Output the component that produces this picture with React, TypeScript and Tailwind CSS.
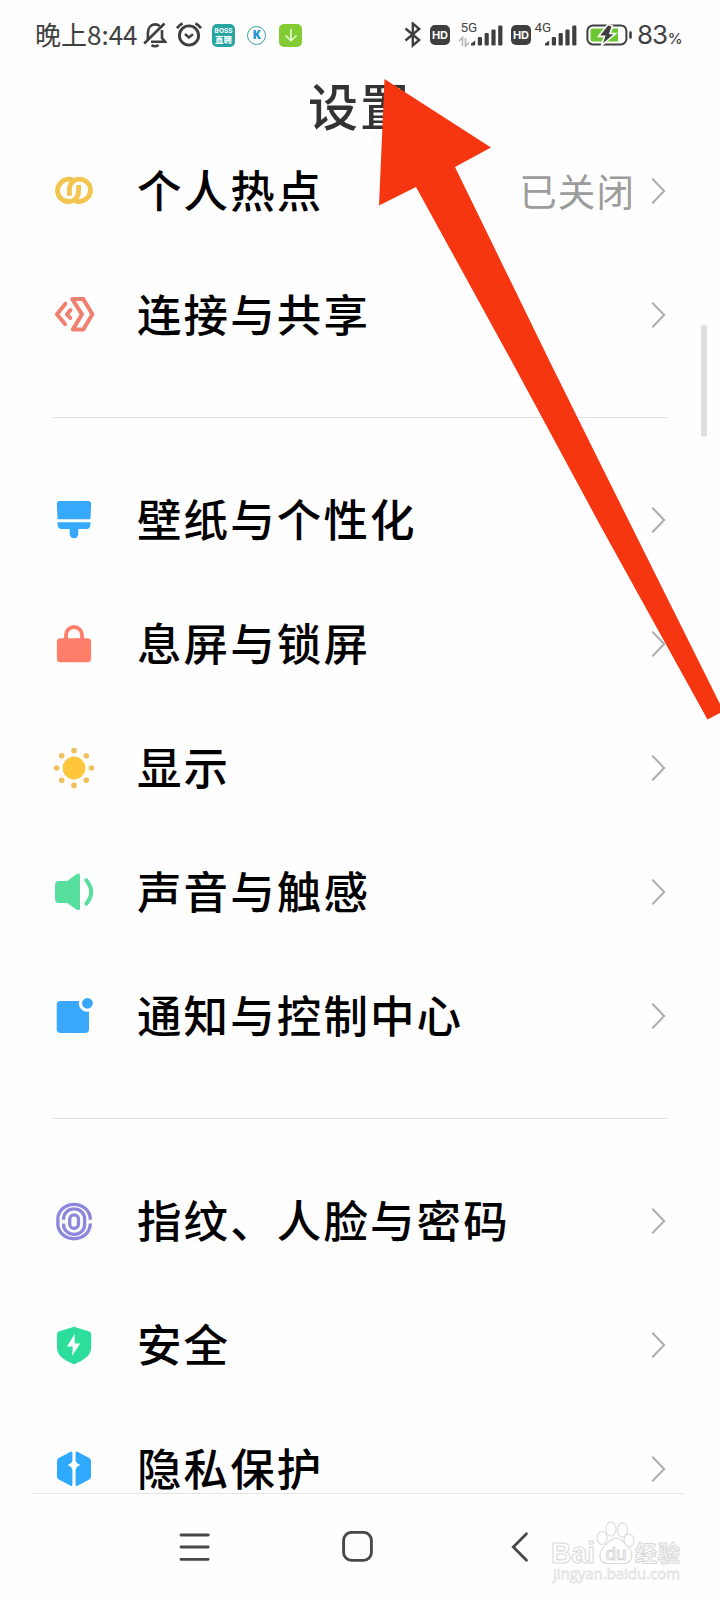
import type { ReactNode } from 'react';

interface SettingItem {
  label: string;
  value?: string;
  icon: ReactNode;
}

function Icon({ children }: { children: ReactNode }) {
  return (
    <svg viewBox="0 0 40 40" className="w-10 h-10 shrink-0 overflow-visible" fill="none">
      {children}
    </svg>
  );
}

/** Settings list, split into groups by a thin divider. */
const GROUPS: SettingItem[][] = [
  [
    {
      label: '个人热点',
      value: '已关闭',
      icon: (
        <Icon>
          <g stroke="#f3c550" strokeWidth="4.8">
            <path d="M18.6 8.6C17 8.2 15.5 8.1 14.4 8.2C8.3 8.8 3.5 13.6 3.5 19.5C3.5 25.6 8.4 30.5 14.6 30.5C20.5 30.5 24.6 26 24.6 20.5V14" />
            <path d="M21.4 30.1C23 30.5 24.5 30.6 25.6 30.5C31.7 29.9 36.5 25.1 36.5 19.2C36.5 13.1 31.6 8.2 25.4 8.2C19.5 8.2 15.4 12.7 15.4 18.2V24.7" />
          </g>
        </Icon>
      ),
    },
    {
      label: '连接与共享',
      icon: (
        <Icon>
          <g stroke="#f0806f" strokeWidth="4" strokeLinejoin="round" strokeLinecap="round">
            <path d="M18.3 4.1H29.3L38.4 19.3L29.3 34.6H18.8L28 19.3Z" />
            <path d="M11.5 8.7L2.9 19.3L11 29.1" />
            <path d="M16.5 15L12.9 19.3L16.3 23" />
          </g>
        </Icon>
      ),
    },
  ],
  [
    {
      label: '壁纸与个性化',
      icon: (
        <Icon>
          <g fill="#36a9fb">
            <path d="M6 1H34Q37.3 1 37.2 4L36.4 19.3H3.6L2.8 4Q2.7 1 6 1Z" />
            <path d="M3.6 22.3H36.4V25Q36 29 32.5 29H24.3V33.8Q24 38.2 20 38.2Q16 38.2 15.7 33.8V29H7.5Q4 29 3.6 25Z" />
          </g>
        </Icon>
      ),
    },
    {
      label: '息屏与锁屏',
      icon: (
        <Icon>
          <rect x="2.9" y="14.3" width="34.2" height="24" rx="3.6" fill="#ff7e6a" />
          <path d="M12 16V11A8 8 0 0 1 28 11V16" stroke="#ff7e6a" strokeWidth="3.8" />
        </Icon>
      ),
    },
    {
      label: '显示',
      icon: (
        <Icon>
          <circle cx="20" cy="20" r="11.4" fill="#ffc63d" />
          <g fill="#edc25c">
            <circle cx="20" cy="2.6" r="2.8" />
            <circle cx="32.3" cy="7.7" r="2.8" />
            <circle cx="37.4" cy="20" r="2.8" />
            <circle cx="32.3" cy="32.3" r="2.8" />
            <circle cx="20" cy="37.4" r="2.8" />
            <circle cx="7.7" cy="32.3" r="2.8" />
            <circle cx="2.6" cy="20" r="2.8" />
            <circle cx="7.7" cy="7.7" r="2.8" />
          </g>
        </Icon>
      ),
    },
    {
      label: '声音与触感',
      icon: (
        <Icon>
          <path
            d="M5 9H13L22.5 2.3Q26 .3 26 3.6V36.2Q26 39.3 22.5 37.4L13 31H5Q1 31 1 27V13Q1 9 5 9Z"
            fill="#58df9d"
          />
          <path d="M32.3 8.2Q42 20 32.3 31.7" stroke="#58df9d" strokeWidth="4" strokeLinecap="round" />
        </Icon>
      ),
    },
    {
      label: '通知与控制中心',
      icon: (
        <Icon>
          <rect x="2.7" y="5" width="32.3" height="32" rx="3.8" fill="#39a8fa" />
          <circle cx="33.4" cy="7.2" r="8.6" fill="#fefefe" />
          <circle cx="33.4" cy="7.3" r="5.4" fill="#39a8fa" />
        </Icon>
      ),
    },
  ],
  [
    {
      label: '指纹、人脸与密码',
      icon: (
        <Icon>
          <g stroke="#8c86dc" strokeWidth="3.3">
            <path d="M36.2 18.8V17A16.2 14.7 0 0 0 3.9 17V24.2A16.2 14.7 0 0 0 36.2 24.2V22.4" />
            <path d="M9.6 18.8V17.6A10.5 9.8 0 0 1 30.6 17.6V23.7A10.5 9.8 0 0 1 9.6 23.7V22.4" />
            <rect x="15.7" y="13.9" width="8.8" height="13.4" rx="4.4" />
          </g>
        </Icon>
      ),
    },
    {
      label: '安全',
      icon: (
        <Icon>
          <path
            d="M18.5 2.2Q20 1.5 21.5 2.2L35.3 6.6Q37.2 7.3 37.2 9.2V22.5C37.2 31 29 35.3 21.5 38.7Q20 39.4 18.5 38.7C11 35.3 3 31 3 22.5V9.2Q3 7.3 4.7 6.6Z"
            fill="#2cdd9b"
          />
          <path d="M20.8 8.8L13 21.4H18.7L18.3 30.8L26.2 18.4H20.7Z" fill="#fff" />
        </Icon>
      ),
    },
    {
      label: '隐私保护',
      icon: (
        <Icon>
          <path
            d="M16.6 2.8Q18.4 2 18.4 4.2V12Q17.6 14.6 13.8 16.1Q17.6 17.6 18.4 20.5V35.5Q18.4 37.6 16.6 36.8L4.8 30.5Q3 29.5 3 27.5V12Q3 10 4.8 9Z"
            fill="#2fa9fc"
          />
          <path
            d="M23.4 2.8Q21.6 2 21.6 4.2V12Q22.4 14.6 26.2 16.1Q22.4 17.6 21.6 20.5V35.5Q21.6 37.6 23.4 36.8L35.2 30.5Q37 29.5 37 27.5V12Q37 10 35.2 9Z"
            fill="#2fa9fc"
          />
        </Icon>
      ),
    },
  ],
];

function SettingRow({ label, value, icon }: SettingItem) {
  return (
    <div className="flex items-center h-[124px] pl-[54px] pr-[54px] shrink-0">
      {icon}
      <span className="ml-[43px] pb-[3px] text-[44.5px] leading-none font-medium tracking-[2.1px] text-black whitespace-nowrap">
        {label}
      </span>
      {value && (
        <span className="ml-auto pb-[3px] text-[37.5px] leading-none font-normal tracking-[1.1px] text-[#9c9c9c]">
          {value}
        </span>
      )}
      <svg viewBox="0 0 14 26" className={`w-3.5 h-[26px] ${value ? 'ml-[17px]' : 'ml-auto'}`} fill="none">
        <path d="M.8 1.2L12.2 13L.8 24.8" stroke="#adadad" strokeWidth="2" strokeLinecap="round" />
      </svg>
    </div>
  );
}

function HdBadge({ className }: { className: string }) {
  return (
    <span
      className={`flex items-center justify-center w-5 h-5 rounded-[5px] bg-[#3f3f3f] text-white text-[11px] leading-none font-bold font-['Inter',sans-serif] pt-px ${className}`}
    >
      HD
    </span>
  );
}

function Signal({ type, className }: { type: '5G' | '4G'; className: string }) {
  const shift = type === '5G' ? 12 : 11;
  return (
    <svg viewBox="0 0 46 26" className={`h-[26px] w-[46px] shrink-0 overflow-visible ${className}`}>
      <text x={type === '5G' ? 1.5 : 0.5} y="10" fontSize="13.5" fill="#444" fontFamily="Roboto, sans-serif">
        {type}
      </text>
      {type === '5G' && (
        <path d="M0 19L3.5 15.6V24M6.5 16V24L10 20.5" stroke="#b5b5b5" strokeWidth="1.6" fill="none" />
      )}
      <g fill="#3f3f3f" transform={`translate(${shift} -1)`}>
        <path d="M0 24.5V22.5L4.2 19.5V23.5Q4.2 24.5 3 24.5Z" />
        <rect x="6.8" y="16" width="4.2" height="8.5" rx="1.3" />
        <rect x="13.6" y="12" width="4.2" height="12.5" rx="1.3" />
        <rect x="20.4" y="8.5" width="4.2" height="16" rx="1.3" />
        <rect x="27.2" y="4.5" width="4.2" height="20" rx="1.3" />
      </g>
    </svg>
  );
}

function StatusBar() {
  return (
    <div className="flex items-center h-[70px] pl-[35px] text-[#3f3f3f] shrink-0">
      <span className="w-[103px] pb-[2px] text-[26px] leading-none whitespace-nowrap">晚上8:44</span>
      {/* muted bell */}
      <svg viewBox="0 0 24 26" className="ml-[5px] w-6 h-[26px]" fill="none" stroke="currentColor" strokeWidth="2.6">
        <path d="M1.2 21.5L21.5 1.5" />
        <path d="M4.9 18V11C5 5.2 8.3 2.4 12 2.4C14 2.4 15.6 3 16.8 4.2" />
        <path d="M8 19.7H22L19 16V8" />
        <path d="M8.5 23.1Q12 25.4 15.5 23.1" />
      </svg>
      {/* alarm */}
      <svg viewBox="0 0 26 26" className="ml-[9px] w-[26px] h-[26px]" fill="none" stroke="currentColor">
        <circle cx="13" cy="13.5" r="9.6" strokeWidth="2.9" />
        <path d="M9 12L12.8 15.5L17 12.2" strokeWidth="2.4" />
        <path d="M1 6.2Q3 3 6.6 1.5M19.4 1.5Q23 3 25 6.2" strokeWidth="2.6" />
      </svg>
      <span className="flex flex-col items-center justify-center ml-[10px] w-[23px] h-[23px] rounded-[5px] bg-[#27a5a2] text-white font-bold">
        <span className="text-[6.5px] leading-[8px] font-['Inter',sans-serif]">BOSS</span>
        <span className="text-[8.5px] leading-[9px]">直聘</span>
      </span>
      <span className="flex items-center justify-center ml-3 w-[19px] h-[19px] rounded-full border border-[#3ba0ad] text-[#2795d3] text-[12px] leading-none font-black pb-px font-['Open_Sans',sans-serif]">
        K
      </span>
      <span className="flex items-center justify-center ml-[13px] w-[23px] h-[23px] rounded-[5px] bg-[#84cc35]">
        <svg viewBox="0 0 14 14" className="w-3.5 h-3.5" fill="none" stroke="#eaffd8" strokeWidth="1.5">
          <path d="M7 1V12.5M1.5 7.5L7 12.7L12.5 7.5" />
        </svg>
      </span>
      {/* bluetooth */}
      <svg viewBox="0 0 18 26" className="ml-[102px] w-[18px] h-[26px]" fill="none" stroke="currentColor" strokeWidth="2.4">
        <path d="M1.5 6.5L15.2 18L8.8 23.5V1.5L15.2 7L1.5 18.5" />
      </svg>
      <HdBadge className="ml-2" />
      <Signal type="5G" className="ml-[9px]" />
      <HdBadge className="ml-[6px]" />
      <Signal type="4G" className="ml-[3px]" />
      <svg viewBox="0 0 48 22" className="ml-[6px] w-12 h-[22px]" fill="none">
        <rect x="1.4" y="1.4" width="39" height="19" rx="5.5" stroke="#3f3f3f" strokeWidth="2" />
        <path d="M6.5 4.5H32V17.5H6.5Q4.5 17.5 4.5 15.5V6.5Q4.5 4.5 6.5 4.5Z" fill="#6cc832" />
        <path
          d="M21.8 .5L12.5 12.4H18.5L15.5 21.5L29.5 9.5H24L26.5 2Z"
          fill="#3f3f3f"
          stroke="#fff"
          strokeWidth="1.6"
        />
        <path d="M44.5 8.5V13.5" stroke="#3f3f3f" strokeWidth="2.6" strokeLinecap="round" />
      </svg>
      <span className="ml-[3px] text-[26px] leading-none font-['Inter',sans-serif] tracking-[-1.2px]">83</span>
      <span className="mt-[7px] ml-px text-[15px] leading-none font-medium font-['Inter',sans-serif]">%</span>
    </div>
  );
}

function Watermark() {
  return (
    <svg
      viewBox="0 0 132 66"
      className="absolute left-[551px] top-[1520px] w-[132px] h-[66px] overflow-visible"
      fill="#fff"
      stroke="#dadada"
      strokeWidth="1.1"
    >
      <text
        x="0"
        y="42.5"
        fontSize="29"
        textLength="44"
        lengthAdjust="spacingAndGlyphs"
        fontFamily="'Liberation Sans', sans-serif"
        fontWeight="700"
      >
        Bai
      </text>
      <ellipse cx="51" cy="18" rx="5" ry="6.5" />
      <ellipse cx="60" cy="9" rx="5" ry="7" />
      <ellipse cx="71.5" cy="10" rx="5" ry="7" />
      <ellipse cx="78" cy="20.5" rx="5" ry="6.5" />
      <path d="M65 18C71 18 74 24 78 28C83 34 81 43.5 73 43.5H57C48 43.5 47 34 52 28C56 24 59 18 65 18Z" />
      <text x="54.5" y="39.5" fontSize="19" textLength="21" fontFamily="'Liberation Sans', sans-serif">
        du
      </text>
      <text x="84" y="41" fontSize="22" fontWeight="700" textLength="45" fontFamily="'Noto Sans CJK SC', sans-serif">
        经验
      </text>
      <text
        x="2"
        y="59"
        fontSize="15"
        strokeWidth="0.8"
        textLength="127"
        lengthAdjust="spacingAndGlyphs"
        stroke="#e2e2e2"
        fontFamily="'Open Sans', sans-serif"
      >
        jingyan.baidu.com
      </text>
    </svg>
  );
}

function NavBar() {
  return (
    <div className="flex items-center h-[106px] shrink-0 bg-[#fefefe] text-[#484848] pl-[179px]">
      <svg viewBox="0 0 32 32" className="w-8 h-8" fill="none" stroke="currentColor" strokeWidth="2.8" strokeLinecap="round">
        <path d="M2 4H29.2M2 16H29.2M2 28.3H29.2" />
      </svg>
      <svg viewBox="0 0 32 32" className="ml-[131px] w-8 h-8" fill="none" stroke="currentColor" strokeWidth="2.9">
        <rect x="1.6" y="1.4" width="27.8" height="28" rx="8" />
      </svg>
      <svg viewBox="0 0 18 32" className="ml-[137px] w-[18px] h-8" fill="none" stroke="currentColor" strokeWidth="2.8" strokeLinecap="round">
        <path d="M15.5 2.7L2.3 16L15.5 29.3" />
      </svg>
    </div>
  );
}

export default function App() {
  return (
    <div className="relative flex flex-col w-[720px] h-[1600px] overflow-hidden bg-[#fefefe] font-['Noto_Sans_CJK_SC',sans-serif]">
      <StatusBar />
      <h1 className="flex items-center justify-center h-[59px] pb-1 pt-[13px] text-[50px] leading-none font-medium tracking-[2px] text-[#333] shrink-0">
        设置
      </h1>

      <main className="flex-1 min-h-0 overflow-hidden">
        {GROUPS.map((items, i) => (
          <section key={items[0].label}>
            {i > 0 && <div className="h-px mx-[53px] my-10 bg-[#e0e0e0]" />}
            {items.map((item) => (
              <SettingRow key={item.label} {...item} />
            ))}
          </section>
        ))}
      </main>
      <div className="h-px ml-8 mr-9 bg-[#e4e4e4] shrink-0" />
      <NavBar />

      {/* scroll thumb */}
      <div className="absolute left-[701px] top-[325px] w-1.5 h-[112px] rounded-full bg-[#dedede]" />
      <Watermark />

      {/* pointer arrow over the title */}
      <svg viewBox="0 0 720 1600" className="absolute left-0 top-0 w-[720px] h-[1600px] pointer-events-none">
        <path d="M384.5 79L491 147.5L455 167L549 360L600 463L720 704V713L707.5 719.5L600 525L511 360L416 187L379 205.5Z" fill="#f53611" />
      </svg>
    </div>
  );
}
